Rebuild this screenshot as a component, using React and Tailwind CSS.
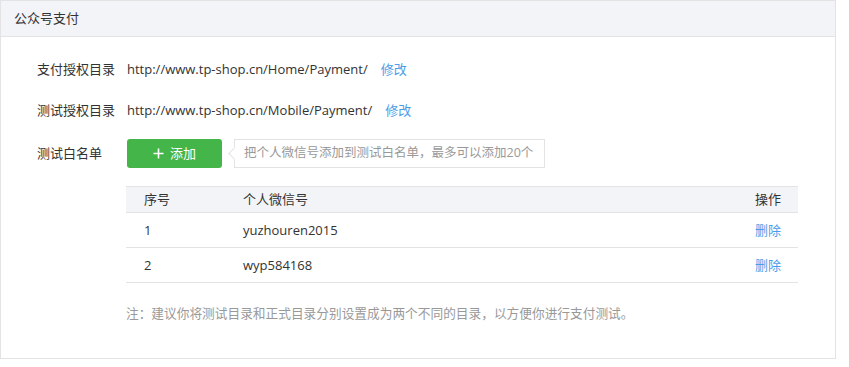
import React from "react";

const font = { fontFamily: '"Open Sans", "Noto Sans CJK SC", sans-serif' };

const whitelist = [
  { id: 1, wechat: "yuzhouren2015" },
  { id: 2, wechat: "wyp584168" },
];

function Row({ label, children, className = "" }) {
  return (
    <div className={"flex items-center " + className}>
      <div className="w-[126px] pl-[36px] text-[13px] text-[#333]">{label}</div>
      <div className="flex items-center">{children}</div>
    </div>
  );
}

export default function App() {
  return (
    <div className="w-[849px] h-[367px] bg-white" style={font}>
      <div className="w-[836px] h-[359px] border border-[#e3e3e3] bg-white">
        <div className="h-[36px] bg-[#f3f4f8] border-b border-[#e3e3e3] flex items-center pl-[13px] text-[13px] text-[#333]">
          公众号支付
        </div>

        <div className="pt-[12px]">
          <Row label="支付授权目录" className="h-[41px]">
            <span className="text-[13px] text-[#333]">http://www.tp-shop.cn/Home/Payment/</span>
            <a className="ml-[13px] text-[13px] text-[#4a9de9] cursor-pointer">修改</a>
          </Row>
          <Row label="测试授权目录" className="h-[41px]">
            <span className="text-[13px] text-[#333]">http://www.tp-shop.cn/Mobile/Payment/</span>
            <a className="ml-[13px] text-[13px] text-[#4a9de9] cursor-pointer">修改</a>
          </Row>
          <Row label="测试白名单" className="mt-[8px] h-[29px]">
            <div className="flex items-center">
              <button className="w-[95px] h-[29px] bg-[#44b549] rounded-[3px] text-white text-[13px] flex items-center justify-center gap-[6px]">
                <svg width="11" height="11" viewBox="0 0 11 11">
                  <path d="M5.5 0.5v10M0.5 5.5h10" stroke="white" strokeWidth="1.6" />
                </svg>
                添加
              </button>
              <div className="relative ml-[12px] h-[29px] w-[311px] border border-[#e3e3e3] flex items-center pl-[9px] text-[12.5px] text-[#999] whitespace-nowrap">
                <span className="absolute left-[-5px] top-[9px] w-[9px] h-[9px] bg-white border-l border-b border-[#e3e3e3] rotate-45"></span>
                把个人微信号添加到测试白名单，最多可以添加20个
              </div>
            </div>
          </Row>

          <div className="ml-[125px] mt-[18px] w-[672px]">
            <div className="h-[27px] bg-[#f3f4f8] border-t border-b border-[#e3e3e3] flex items-center text-[13px] text-[#333]">
              <div className="w-[117px] pl-[18px]">序号</div>
              <div className="flex-1">个人微信号</div>
              <div className="pr-[17px]">操作</div>
            </div>
            {whitelist.map((row) => (
              <div
                key={row.id}
                className="h-[35px] pt-[2px] border-b border-[#e3e3e3] flex items-center text-[13px] text-[#333]"
              >
                <div className="w-[117px] pl-[18px]">{row.id}</div>
                <div className="flex-1">{row.wechat}</div>
                <a className="pr-[17px] text-[#4a9de9] cursor-pointer">删除</a>
              </div>
            ))}
            <div className="mt-[20px] text-[12.7px] leading-[20px] text-[#999]">
              注：建议你将测试目录和正式目录分别设置成为两个不同的目录，以方便你进行支付测试。
            </div>
          </div>
        </div>
      </div>
    </div>
  );
}
